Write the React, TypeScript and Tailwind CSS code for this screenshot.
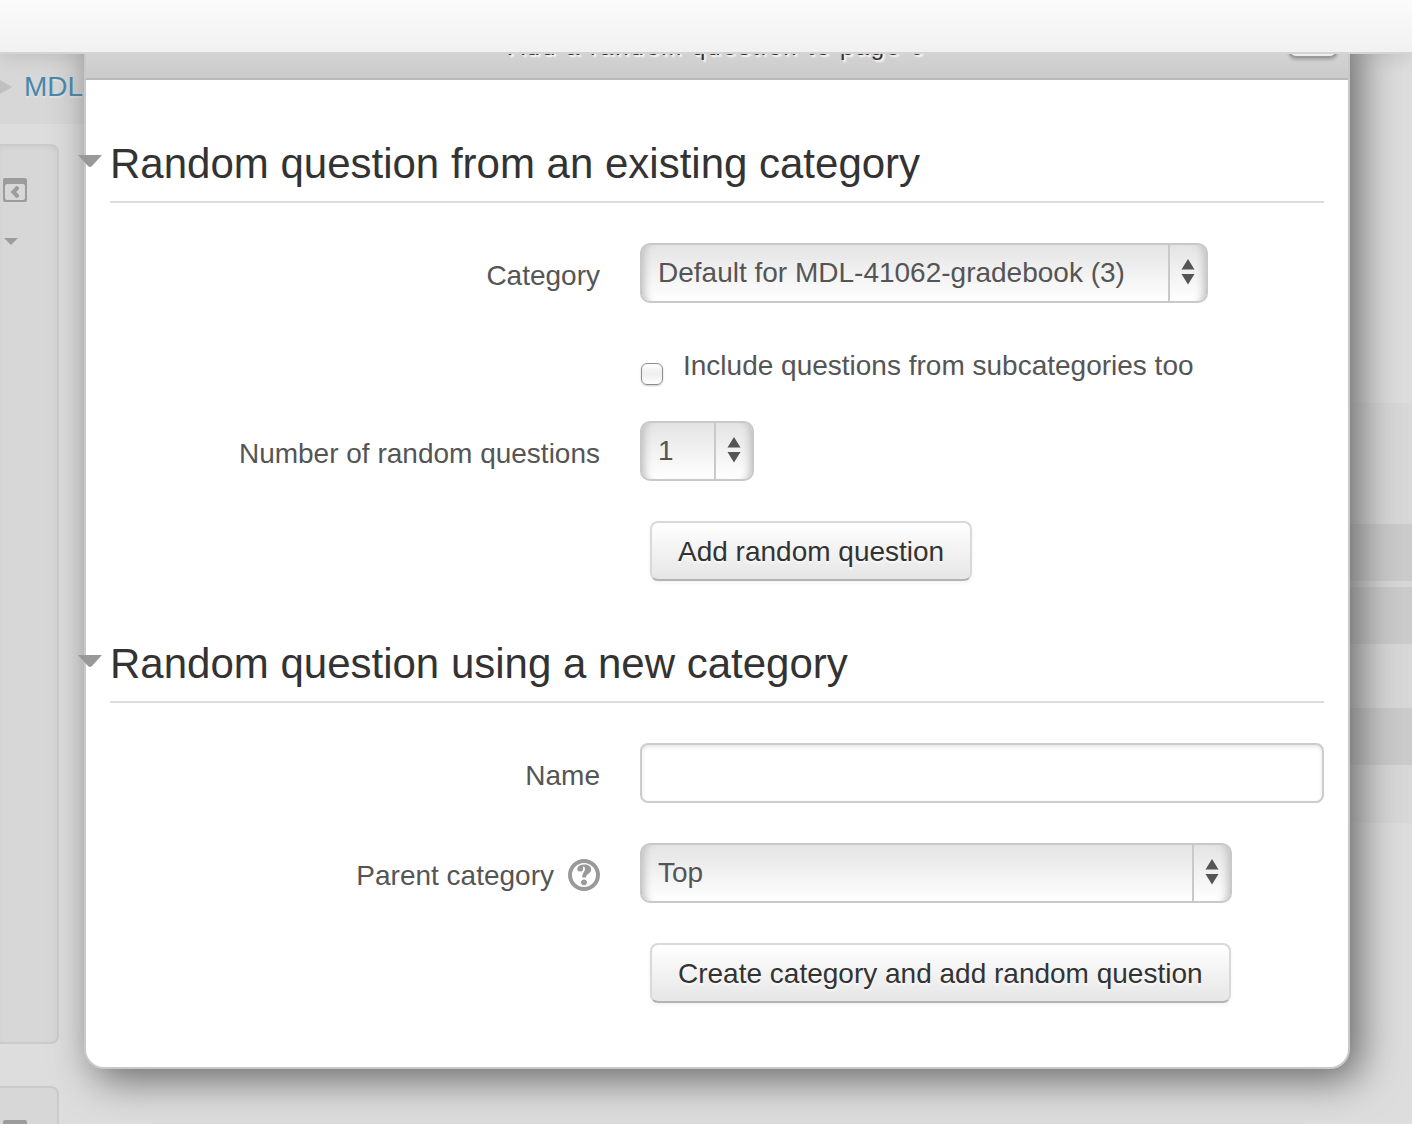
import React from "react";

interface SelectFieldProps {
  id: string;
  options: string[];
  className: string;
}

interface RowProps {
  label?: React.ReactNode;
  children: React.ReactNode;
}

interface SectionProps {
  title: string;
  children: React.ReactNode;
}

const PanelIcon = () => (
  <svg viewBox="0 0 24 24" className="h-6 w-6 shrink-0" fill="#9c9c9c" aria-hidden="true">
    <path fillRule="evenodd" d="M2 0H22Q24 0 24 2V22Q24 24 22 24H2Q0 24 0 22V2Q0 0 2 0ZM4 6Q2 6 2 8V20Q2 22 4 22H20Q22 22 22 20V8Q22 6 20 6Z" />
    <path d="M7.7 14L13.5 7.7L16 9.5V11L13.2 14L16 17V18.5L13.5 20.3Z" />
  </svg>
);

const HelpIcon = () => (
  <svg viewBox="0 0 32 32" className="h-8 w-8" aria-hidden="true">
    <circle cx="16" cy="16" r="14" fill="none" stroke="#999" strokeWidth="4" />
    <path
      fill="#999"
      d="M9.3 9.6C9.8 7 12.4 5.6 16.2 5.6C20.4 5.6 23.2 7.4 23.2 10.6C23.2 14.6 18.4 14.4 18 18.4H14.2C14 14.2 17 13 17 9.8C17 7.9 15.8 7.4 14.8 7.8C15.8 10.6 14.6 12.6 12.2 12.6C10.2 12.6 8.9 11.4 9.3 9.6Z"
    />
    <circle cx="16" cy="23.3" r="2.9" fill="#999" />
  </svg>
);

const SelectField: React.FC<SelectFieldProps> = ({ id, options, className }) => (
  <div className={`relative h-[60px] ${className}`}>
    <select
      id={id}
      className="h-full w-full appearance-none rounded-[10px] border-2 border-[#c9c9c9] bg-linear-to-b from-[#e4e4e4] to-white pr-10 pl-4 text-[#555] shadow-[inset_10px_0_8px_-8px_#bbb,inset_-10px_0_8px_-8px_#bbb]"
    >
      {options.map((option) => (
        <option key={option}>{option}</option>
      ))}
    </select>
    <div className="pointer-events-none absolute inset-y-[2px] right-[2px] flex w-[38px] items-center justify-center border-l-2 border-[#c9c9c9] pb-[2px]">
      <svg viewBox="0 0 14 26" className="h-[26px] w-[14px]" fill="#555" aria-hidden="true">
        <path d="M7 0L13.5 10.5H0.5ZM0.5 15H13.5L7 25.5Z" />
      </svg>
    </div>
  </div>
);

const Row: React.FC<RowProps> = ({ label, children }) => (
  <div className="grid grid-cols-[490px_1fr] gap-x-10">
    <div className="flex justify-end gap-[14px] pt-[13px] leading-10">{label}</div>
    <div>{children}</div>
  </div>
);

const SubmitButton: React.FC<{ children: React.ReactNode }> = ({ children }) => (
  <button
    type="button"
    className="ml-[10px] h-[60px] rounded-lg border-2 border-[#d9d9d9] border-b-[#b3b3b3] bg-linear-to-b from-white to-[#e6e6e6] px-[26px] pt-[2px] text-[#333] shadow-[0_2px_4px_rgba(0,0,0,0.05)] [text-shadow:0_2px_2px_rgba(255,255,255,0.75)]"
  >
    {children}
  </button>
);

const Section: React.FC<SectionProps> = ({ title, children }) => (
  <section>
    <h2 className="relative h-20 border-b-2 border-[#ddd] text-[42px] leading-[82px] text-[#333]">
      <svg viewBox="0 0 24 12" className="absolute top-8 -left-8 h-3 w-6" fill="#999" aria-hidden="true">
        <path d="M0 0H24L14 11Q12 13 10 11Z" />
      </svg>
      {title}
    </h2>
    <div className="flex flex-col gap-10 pt-10">{children}</div>
  </section>
);

const Backdrop = () => (
  <div className="col-start-1 row-start-1 flex justify-between overflow-hidden">
    <div className="flex w-[360px] flex-col">
      <nav className="flex h-[70px] shrink-0 items-center bg-[#d7d7d7] pb-1">
        <svg viewBox="0 0 12 14" className="h-[14px] w-3" fill="#c0c0c0" aria-hidden="true">
          <path d="M0 0L12 7L0 14Z" />
        </svg>
        <a href="#" className="ml-3 whitespace-nowrap text-[#4788ab] [text-shadow:0_2px_0_#e2e2e2]">
          MDL-41062
        </a>
      </nav>
      <aside className="mt-5 flex w-[59px] flex-1 flex-col gap-[42px]">
        <div className="flex h-[900px] shrink-0 flex-col gap-9 rounded-r-lg border-2 border-l-0 border-[#cbcbcb] bg-[#d7d7d7] pt-8 pl-[3px] shadow-[inset_0_2px_4px_rgba(0,0,0,0.04)]">
          <PanelIcon />
          <svg viewBox="0 0 14 7" className="ml-[1px] h-[7px] w-[14px]" fill="#9c9c9c" aria-hidden="true">
            <path d="M0 0H14L7 7Z" />
          </svg>
        </div>
        <div className="h-[38px] overflow-hidden rounded-tr-lg border-2 border-b-0 border-l-0 border-[#cbcbcb] bg-[#d7d7d7] pt-8 pl-[3px]">
          <PanelIcon />
        </div>
      </aside>
    </div>
    <div className="w-[200px] pt-[349px]">
      <div className="h-[121px] bg-[#d8d8d8]" />
      <div className="h-[57px] bg-[#cbcbcb]" />
      <div className="h-[6px] bg-[#d8d8d8]" />
      <div className="h-[57px] bg-[#cbcbcb]" />
      <div className="h-16 bg-[#d8d8d8]" />
      <div className="h-[57px] bg-[#cbcbcb]" />
      <div className="h-[58px] bg-[#d8d8d8]" />
    </div>
  </div>
);

const RandomQuestionDialog = () => (
  <div className="z-20 col-start-1 row-start-1 overflow-hidden">
    <div
      role="dialog"
      aria-labelledby="dialog-title"
      className="-mt-9 mr-[62px] ml-[84px] rounded-[20px] border-2 border-[#c9c9c9] bg-white shadow-[10px_10px_40px_#666]"
    >
      <div className="relative flex h-[60px] items-center justify-center rounded-t-[18px] border-b-2 border-[#b9b9b9] bg-linear-to-b from-[#dedede] to-[#cbcbcb]">
        <h1 id="dialog-title" className="pb-1 text-2xl leading-10 tracking-[2px] text-[#333] [text-shadow:2px_2px_2px_#fff]">
          Add a random question to page 0
        </h1>
        <button
          type="button"
          aria-label="Close"
          className="absolute top-0 right-[10px] h-[38px] w-[50px] rounded-lg border-2 border-[#999] bg-linear-to-b from-white to-[#eee] shadow-[0_2px_3px_rgba(0,0,0,0.2)]"
        />
      </div>

      <form className="flex flex-col gap-[42px] px-6 pt-[43px] pb-16">
        <Section title="Random question from an existing category">
          <Row label={<label htmlFor="category">Category</label>}>
            <SelectField id="category" options={["Default for MDL-41062-gradebook (3)"]} className="w-[568px]" />
          </Row>
          <Row>
            <div className="flex h-[38px] gap-5">
              <input
                id="subcategories"
                type="checkbox"
                className="mt-5 ml-[1px] h-[22px] w-[22px] appearance-none rounded-[6px] border border-[#8c8c8c] bg-linear-to-b from-white via-[#eee] to-white shadow-[0_1px_2px_rgba(0,0,0,0.2)]"
              />
              <label htmlFor="subcategories" className="leading-[46px]">
                Include questions from subcategories too
              </label>
            </div>
          </Row>
          <Row label={<label htmlFor="number">Number of random questions</label>}>
            <SelectField id="number" options={["1", "2", "3", "4", "5"]} className="w-[114px]" />
          </Row>
          <Row>
            <SubmitButton>Add random question</SubmitButton>
          </Row>
        </Section>

        <Section title="Random question using a new category">
          <Row label={<label htmlFor="name">Name</label>}>
            <input
              id="name"
              type="text"
              className="block h-[60px] w-full rounded-lg border-2 border-[#ccc] bg-white px-3 shadow-[inset_0_2px_4px_rgba(0,0,0,0.1)]"
            />
          </Row>
          <Row
            label={
              <>
                <label htmlFor="parent">Parent category</label>
                <button type="button" aria-label="Help with Parent category" className="h-[38px]">
                  <HelpIcon />
                </button>
              </>
            }
          >
            <SelectField id="parent" options={["Top"]} className="w-[592px]" />
          </Row>
          <Row>
            <SubmitButton>Create category and add random question</SubmitButton>
          </Row>
        </Section>
      </form>
    </div>
  </div>
);

export default function App() {
  return (
    <div className="flex min-h-screen flex-col bg-[#ddd] font-['Liberation_Sans',Arial,sans-serif] text-[28px] leading-10 text-[#555]">
      <header className="relative z-10 h-[54px] shrink-0 border-b-2 border-[#d4d4d4] bg-linear-to-b from-[#fbfbfb] to-[#f1f1f1] shadow-[0_2px_20px_rgba(0,0,0,0.12)]" />
      <main className="grid flex-1">
        <Backdrop />
        <RandomQuestionDialog />
      </main>
    </div>
  );
}
